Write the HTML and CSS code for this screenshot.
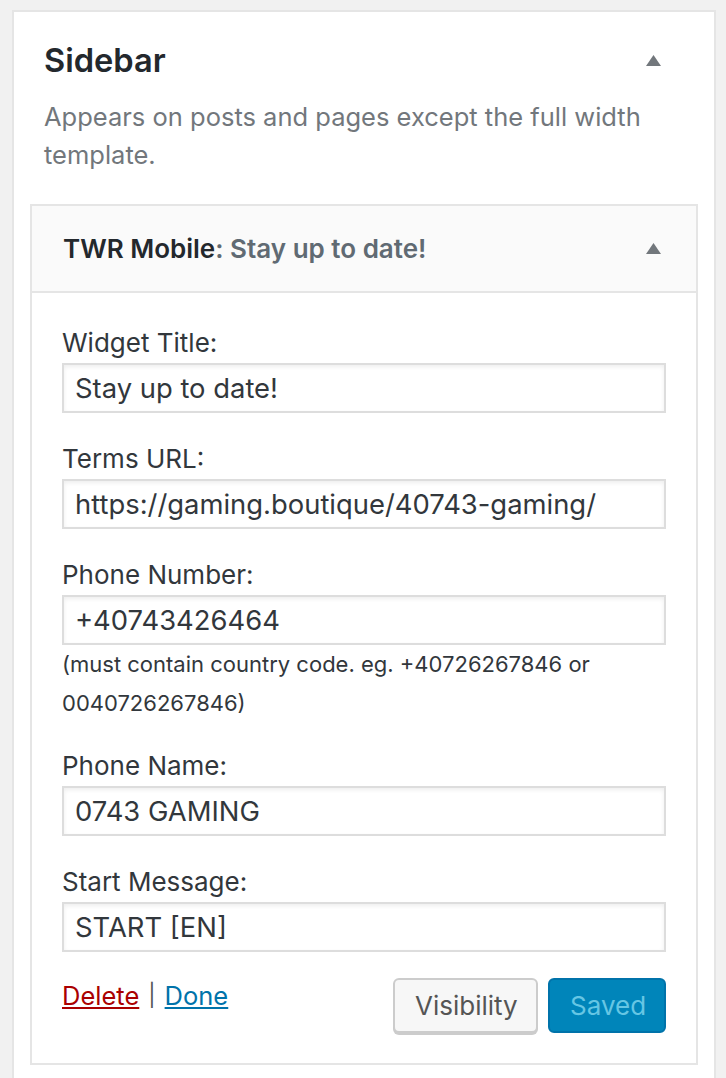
FILE: index.html
```html
<!DOCTYPE html>
<html>
<head>
<meta charset="utf-8">
<link rel="stylesheet" href="styles.css">
</head>
<body>
<div class="sidebar">
  <div class="sidebar-head">
    <h2 class="sidebar-title">Sidebar</h2>
    <svg class="arrow" width="15" height="11" viewBox="0 0 15 11"><polygon points="0,11 7.5,0 15,11" fill="#72777c"/></svg>
  </div>
  <p class="sidebar-desc">Appears on posts and pages except the full width template.</p>
  <div class="widget">
    <div class="widget-top">
      <h3 class="widget-title">TWR Mobile<span class="colon">:</span> <span class="in-title">Stay up to date!</span></h3>
      <svg class="arrow" width="15" height="11" viewBox="0 0 15 11"><polygon points="0,11 7.5,0 15,11" fill="#72777c"/></svg>
    </div>
    <div class="widget-inside">
      <div class="field">
        <label class="field-label">Widget Title:</label>
        <div class="input">Stay up to date!</div>
      </div>
      <div class="field">
        <label class="field-label">Terms URL:</label>
        <div class="input">https://gaming.boutique/40743-gaming/</div>
      </div>
      <div class="field with-help">
        <label class="field-label">Phone Number:</label>
        <div class="input">+40743426464</div>
        <div class="help">(must contain country code. eg. +40726267846 or 0040726267846)</div>
      </div>
      <div class="field">
        <label class="field-label">Phone Name:</label>
        <div class="input">0743 GAMING</div>
      </div>
      <div class="field last">
        <label class="field-label">Start Message:</label>
        <div class="input">START [EN]</div>
      </div>
      <div class="actions">
        <div class="links"><a class="delete" href="#">Delete</a><span class="sep">|</span><a class="done" href="#">Done</a></div>
        <div class="buttons">
          <button class="btn btn-secondary">Visibility</button>
          <button class="btn btn-primary">Saved</button>
        </div>
      </div>
    </div>
  </div>
</div>
</body>
</html>
```
FILE: styles.css
```css
html, body {
  margin: 0;
  padding: 0;
  background: #f1f1f1;
}
body {
  padding: 10px 0 0 12px;
  font-family: "Inter", "Roboto", "Liberation Sans", sans-serif;
  color: #32373c;
  height: 1068px;
  overflow: hidden;
}
.sidebar {
  width: 704px;
  box-sizing: border-box;
  background: #fff;
  border: 2px solid #e5e5e5;
  padding: 0 16px 40px;
}
.sidebar-head {
  display: flex;
  justify-content: space-between;
  align-items: center;
  padding: 26px 37px 0 14px;
}
.sidebar-title {
  margin: 0;
  font-size: 32.6px;
  line-height: 44px;
  font-weight: 600;
  color: #23282d;
}
.sidebar-desc {
  margin: 16px 0 0;
  padding: 0 30px 0 14px;
  font-size: 25.5px;
  line-height: 38px;
  color: #72777c;
}
.widget {
  margin-top: 30px;
  border: 2px solid #e5e5e5;
  background: #fff;
}
.widget-top {
  height: 85px;
  background: #fafafa;
  border-bottom: 2px solid #e5e5e5;
  display: flex;
  align-items: center;
  justify-content: space-between;
  padding: 0 35px 0 31px;
}
.widget-title {
  margin: 0;
  font-size: 26px;
  font-weight: 600;
  color: #23282d;
}
.in-title {
  color: #606a73;
}
.colon {
  color: #606a73;
}
.widget-inside {
  padding: 32px 30px 30px;
}
.field {
  margin-bottom: 28px;
}
.field.with-help {
  margin-bottom: 25px;
}
.field.last {
  margin-bottom: 26px;
}
.field-label {
  display: block;
  font-size: 26px;
  line-height: 36px;
  color: #32373c;
}
.input {
  margin-top: 2px;
  height: 50px;
  box-sizing: border-box;
  border: 2px solid #ddd;
  box-shadow: inset 0 2px 4px rgba(0, 0, 0, 0.07);
  padding: 0 11px;
  font-size: 27.4px;
  line-height: 46px;
  color: #32373c;
  white-space: nowrap;
  overflow: hidden;
}
.help {
  font-size: 22px;
  line-height: 39px;
  color: #32373c;
}
.actions {
  display: flex;
  justify-content: space-between;
  align-items: flex-start;
}
.links {
  font-size: 25.5px;
  line-height: 36px;
  color: #555;
}
.delete {
  color: #a00;
}
.done {
  color: #0073aa;
}
.sep {
  padding: 0 9px;
  font-size: 22px;
  position: relative;
  top: -2px;
}
.buttons {
  display: flex;
  gap: 10px;
}
.btn {
  font-family: inherit;
  font-size: 26px;
  height: 55px;
  border-radius: 6px;
  padding: 0 20px;
  margin: 0;
  cursor: pointer;
}
.btn-secondary {
  background: #f7f7f7;
  border: 2px solid #ccc;
  box-shadow: 0 2px 0 #ccc;
  color: #555;
  width: 145px;
}
.btn-primary {
  background: #0085ba;
  border: 2px solid #0073aa;
  color: #66c6e4;
  width: 118px;
}
```
